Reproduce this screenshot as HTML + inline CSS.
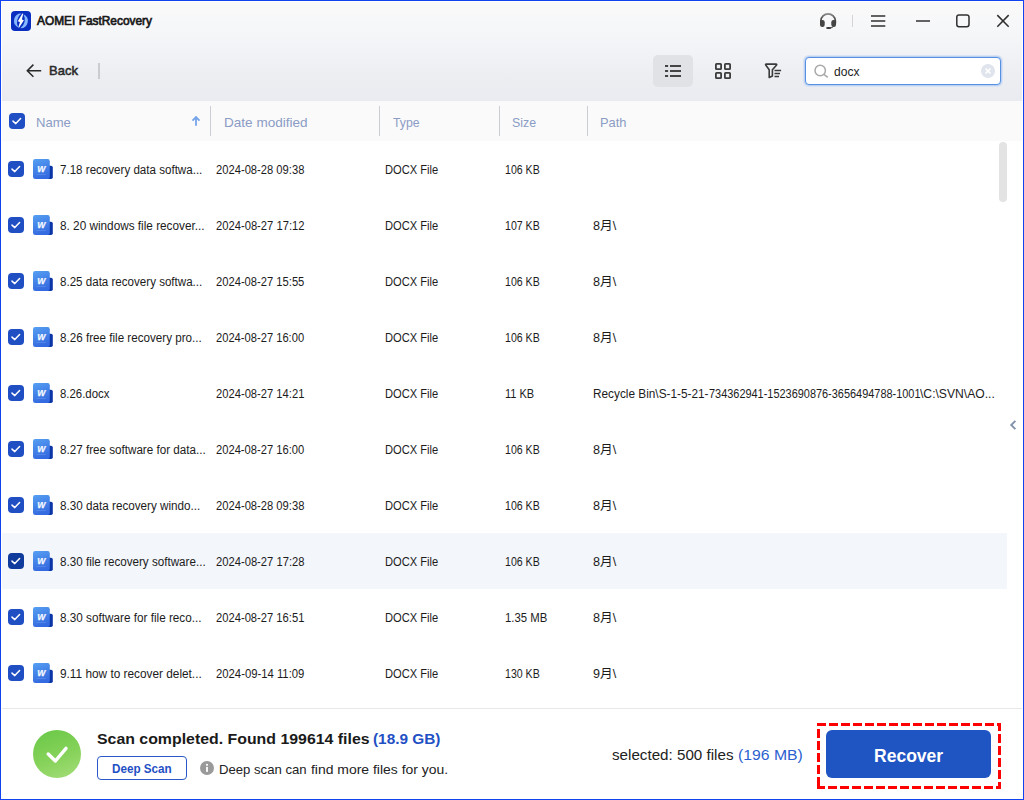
<!DOCTYPE html>
<html lang="en">
<head>
<meta charset="utf-8">
<title>AOMEI FastRecovery</title>
<style>
*{box-sizing:border-box;margin:0;padding:0}
html,body{width:1024px;height:800px;overflow:hidden;background:#fff}
body{font-family:"Liberation Sans","Noto Sans CJK SC",sans-serif;color:#1c1c1c;position:relative;font-size:12px}
div,span,svg{position:absolute}
.t{white-space:nowrap;transform-origin:0 50%;display:block}
#top{left:0;top:0;width:1024px;height:101px;background:linear-gradient(#fafafa 0%,#f5f6f8 35%,#eceef2 75%,#e9ebf0 100%)}
#title{font-size:12.5px;color:#1a1a1a;line-height:16px;-webkit-text-stroke:.7px #1a1a1a}
#back{font-size:13.6px;color:#2a2a2a;line-height:16px;-webkit-text-stroke:.55px #2a2a2a}
#hdr{left:0;top:101px;width:1024px;height:40px;background:#fafafa}
.hl{font-size:13px;color:#8b9cc5;line-height:16px}
.vsep{top:106px;width:1px;height:30px;background:#cbced5}
.cb{width:16px;height:16px;border-radius:4px;background:#1f4fc3}
.ck{left:0;top:0;width:16px;height:16px}
.wd{width:20px;height:20px}
.row{left:2px;width:1005px;height:56px;background:#f3f6fb}
.r{line-height:16px;font-size:12.3px;color:#1c1c1c}
#footline{left:2px;top:708px;width:1020px;height:1px;background:#e8e8e8}
#sb{left:999px;top:142px;width:8px;height:60px;border-radius:4px;background:#e3e3e3}
#okc{left:33px;top:730px;width:48px;height:48px;border-radius:50%;background:linear-gradient(160deg,#68c846 0%,#86d25a 55%,#a5de7a 100%)}
.scan{font-size:15px;font-weight:bold;line-height:20px;color:#1a1a1a}
#deep{left:97px;top:756px;width:90px;height:24px;border:1px solid #2a58c8;border-radius:4px;background:#fff}
#deept{font-size:12.2px;font-weight:bold;color:#1f50c4;line-height:16px}
#info{left:200px;top:761px;width:14px;height:14px}
.dm{font-size:13.6px;line-height:18px;color:#222}
.selt{font-size:15.4px;line-height:20px;color:#222}
#recbtn{left:826px;top:730px;width:165px;height:48px;border-radius:6px;background:#1f55c3}
#rect{font-size:18px;font-weight:bold;color:#fff;line-height:24px}
#q{font-size:12.2px;line-height:16px;color:#1c1c1c}
#bord{left:0;top:0;width:1024px;height:800px;border:1px solid #1044f3;pointer-events:none}
#bord2{left:1px;top:1px;width:1022px;height:798px;border:1px solid #fffffb;pointer-events:none}
</style>
</head>
<body>
<div id="top"></div>
<svg style="left:10px;top:10px;width:22px;height:22px" viewBox="-1 -1 22 22">
<rect x="-.6" y="-.6" width="21.2" height="21.2" rx="4.6" fill="#fdfdfd"/>
<rect width="20" height="20" rx="4" fill="#0a2ec0"/>
<path id="cr" d="M10.4 2.6 A7.3 7.3 0 0 0 7.4 16.6 A10.6 10.6 0 0 1 10.4 2.6 Z" fill="#86b7ff"/>
<path d="M10.4 2.6 A7.3 7.3 0 0 0 7.4 16.6 A10.6 10.6 0 0 1 10.4 2.6 Z" fill="#86b7ff" transform="rotate(180 9.9 9.9)"/>
<path d="M11.4 2.6 L12.2 2.8 L10.9 8.6 L12.9 9.2 L8 16.8 L7.3 16.5 L8.9 10.9 L6.8 10.3 Z" fill="#fff"/>
</svg>
<div id="title" class="t" style="left:37.35px;top:13px;transform:scaleX(0.9516);">AOMEI FastRecovery</div>
<svg style="left:819px;top:12px;width:19px;height:18px" viewBox="0 0 19 18">
<defs><linearGradient id="hg" x1="0" y1="0" x2="0" y2="1"><stop offset="0" stop-color="#8a8a8a"/><stop offset=".45" stop-color="#555"/><stop offset="1" stop-color="#333"/></linearGradient></defs>
<path d="M1.9 11.5 V9 A7.2 7.2 0 0 1 16.3 9 V11.5" fill="none" stroke="url(#hg)" stroke-width="1.8"/>
<rect x="1" y="8" width="4.7" height="6.9" rx="2.2" fill="#444"/>
<rect x="12.3" y="8" width="4.7" height="6.9" rx="2.2" fill="#444"/>
<path d="M14.6 14.4 Q13.4 15.8 11 16" fill="none" stroke="#444" stroke-width="1"/>
<ellipse cx="9.6" cy="16" rx="2.6" ry="1" fill="#2e2e2e"/>
</svg>
<div style="left:852px;top:15px;width:1px;height:12px;background:#d4d4d4"></div>
<svg style="left:870px;top:13px;width:16px;height:16px" viewBox="0 0 16 16"><path d="M1 2.9 H15.3 M1 8 H15.3 M1 13.1 H15.3" stroke="#303030" stroke-width="1.5" fill="none"/></svg>
<svg style="left:915px;top:13px;width:16px;height:16px" viewBox="0 0 16 16"><path d="M1 8 H15" stroke="#303030" stroke-width="1.5" fill="none"/></svg>
<svg style="left:955px;top:13px;width:16px;height:16px" viewBox="0 0 16 16"><rect x="1.8" y="1.9" width="12.2" height="11.8" rx="2.2" stroke="#303030" stroke-width="1.5" fill="none"/></svg>
<svg style="left:995px;top:13px;width:16px;height:16px" viewBox="0 0 16 16"><path d="M2.3 2.1 L13.7 13.7 M13.7 2.1 L2.3 13.7" stroke="#303030" stroke-width="1.5" fill="none"/></svg>
<svg style="left:25px;top:62px;width:18px;height:18px" viewBox="0 0 18 18"><path d="M16.2 8.7 H2.4 M8.4 2.6 L2.3 8.7 L8.4 14.8" stroke="#2a2a2a" stroke-width="1.5" fill="none"/></svg>
<div id="back" class="t" style="left:48.50px;top:63px;transform:scaleX(0.9553);">Back</div>
<div style="left:98px;top:63px;width:2px;height:16px;background:#cbcccf"></div>
<div style="left:653px;top:55px;width:40px;height:32px;border-radius:5px;background:#e0e2e6"></div>
<svg style="left:663px;top:61px;width:20px;height:20px" viewBox="0 0 20 20"><g fill="#454545"><rect x="2" y="4" width="3.1" height="2"/><rect x="2" y="9" width="3.1" height="2"/><rect x="2" y="14" width="3.1" height="2"/><rect x="7" y="4" width="11" height="2"/><rect x="7" y="9" width="11" height="2"/><rect x="7" y="14" width="11" height="2"/></g></svg>
<svg style="left:714px;top:62px;width:18px;height:18px" viewBox="0 0 18 18"><g stroke="#3c3c3c" stroke-width="1.8" fill="none"><rect x="1.9" y="1.9" width="5.2" height="5.2" rx=".7"/><rect x="10.9" y="1.9" width="5.2" height="5.2" rx=".7"/><rect x="1.9" y="10.9" width="5.2" height="5.2" rx=".7"/><rect x="10.9" y="10.9" width="5.2" height="5.2" rx=".7"/></g></svg>
<svg style="left:763px;top:62px;width:20px;height:18px" viewBox="0 0 20 18"><g stroke="#3a3a3a" stroke-width="1.6" fill="none" stroke-linejoin="round"><path d="M3.4 2.1 H12.9 Q14.3 2.1 13.4 3.2 L9.4 7.8 V14.1 L6.2 15.5 V7.8 L2.9 3.2 Q2 2.1 3.4 2.1 Z"/><path d="M11.5 8.6 H18.1 M11.5 11.6 H17 M11.5 14.6 H16" stroke-width="1.5"/></g></svg>
<div style="left:805px;top:57px;width:196px;height:28px;border-radius:4px;background:#fff;border:1px solid #5590e2;box-shadow:0 0 0 1px #bcd1f2,0 0 0 2px #d9e3f3"></div>
<svg style="left:812px;top:63px;width:18px;height:18px" viewBox="0 0 18 18"><circle cx="8.2" cy="7.5" r="5.2" stroke="#a9a9a9" stroke-width="1.5" fill="none"/><path d="M11.9 11.3 L15.8 14.4" stroke="#a9a9a9" stroke-width="1.6" fill="none"/></svg>
<div id="q" class="t" style="left:833.63px;top:63.5px;transform:scaleX(0.9872);">docx</div>
<svg style="left:981px;top:64px;width:14px;height:14px" viewBox="0 0 14 14"><circle cx="7" cy="7" r="7" fill="#dfe4ed"/><path d="M4.5 4.5 L9.5 9.5 M9.5 4.5 L4.5 9.5" stroke="#fff" stroke-width="1.7" fill="none"/></svg>
<div id="hdr"></div>
<div class="cb" style="left:9px;top:113px"><svg class="ck" viewBox="0 0 16 16"><path d="M4 8.1 L6.8 10.6 L11.6 5.6" fill="none" stroke="#fff" stroke-width="1.5" stroke-linecap="round" stroke-linejoin="round"/></svg></div>
<div id="h1" class="t hl" style="left:35.64px;top:114.8px;transform:scaleX(1.0062);">Name</div>
<div id="h2" class="t hl" style="left:223.79px;top:114.8px;transform:scaleX(1.0425);">Date modified</div>
<div id="h3" class="t hl" style="left:393.29px;top:114.8px;transform:scaleX(0.9408);">Type</div>
<div id="h4" class="t hl" style="left:511.96px;top:114.8px;transform:scaleX(0.9514);">Size</div>
<div id="h5" class="t hl" style="left:599.94px;top:114.8px;transform:scaleX(0.9902);">Path</div>
<div class="vsep" style="left:210px"></div>
<div class="vsep" style="left:379px"></div>
<div class="vsep" style="left:499px"></div>
<div class="vsep" style="left:587px"></div>
<svg style="left:191px;top:116px;width:10px;height:11px" viewBox="0 0 10 11"><path d="M5 9.8 V1.2 M1.5 4.6 L5 1 L8.5 4.6" stroke="#76a4e9" stroke-width="1.8" fill="none"/></svg>
<svg style="left:0;top:0;width:0;height:0"><defs><linearGradient id="wg" x1="0" y1="0" x2="0.3" y2="1"><stop offset="0" stop-color="#56a0f2"/><stop offset="1" stop-color="#356be0"/></linearGradient></defs></svg>
<div class="cb" style="left:8px;top:161px"><svg class="ck" viewBox="0 0 16 16"><path d="M4 8.1 L6.8 10.6 L11.6 5.6" fill="none" stroke="#fff" stroke-width="1.5" stroke-linecap="round" stroke-linejoin="round"/></svg></div><svg class="wd" style="left:33px;top:159px" viewBox="0 0 20 20"><path d="M14 6.8 h4 a1.8 1.8 0 0 1 1.8 1.8 v9.6 a1.8 1.8 0 0 1 -1.8 1.8 h-4 z" fill="#0b35a6"/><rect x="0" y="0" width="16.8" height="20" rx="2.2" fill="url(#wg)"/><rect x="3.5" y="15" width="9.5" height="0.8" fill="#7aa6f4" opacity=".45"/><text x="8.2" y="12.8" text-anchor="middle" font-family="Liberation Sans,sans-serif" font-weight="bold" font-style="italic" font-size="8.6" fill="#f6f9ff" stroke="#f6f9ff" stroke-width=".25">W</text></svg><div id="n0" class="t r" style="left:59.57px;top:161.5px;transform:scaleX(0.9423);">7.18 recovery data softwa...</div><div id="d0" class="t r" style="left:216.05px;top:161.5px;transform:scaleX(0.9103);">2024-08-28 09:38</div><div id="t0" class="t r" style="left:385.38px;top:161.5px;transform:scaleX(0.9062);">DOCX File</div><div id="s0" class="t r" style="left:505.01px;top:161.5px;transform:scaleX(0.8605);">106 KB</div>
<div class="cb" style="left:8px;top:217px"><svg class="ck" viewBox="0 0 16 16"><path d="M4 8.1 L6.8 10.6 L11.6 5.6" fill="none" stroke="#fff" stroke-width="1.5" stroke-linecap="round" stroke-linejoin="round"/></svg></div><svg class="wd" style="left:33px;top:215px" viewBox="0 0 20 20"><path d="M14 6.8 h4 a1.8 1.8 0 0 1 1.8 1.8 v9.6 a1.8 1.8 0 0 1 -1.8 1.8 h-4 z" fill="#0b35a6"/><rect x="0" y="0" width="16.8" height="20" rx="2.2" fill="url(#wg)"/><rect x="3.5" y="15" width="9.5" height="0.8" fill="#7aa6f4" opacity=".45"/><text x="8.2" y="12.8" text-anchor="middle" font-family="Liberation Sans,sans-serif" font-weight="bold" font-style="italic" font-size="8.6" fill="#f6f9ff" stroke="#f6f9ff" stroke-width=".25">W</text></svg><div id="n1" class="t r" style="left:59.66px;top:217.5px;transform:scaleX(0.9569);">8. 20 windows file recover...</div><div id="d1" class="t r" style="left:216.05px;top:217.5px;transform:scaleX(0.9110);">2024-08-27 17:12</div><div id="t1" class="t r" style="left:385.38px;top:217.5px;transform:scaleX(0.9062);">DOCX File</div><div id="s1" class="t r" style="left:505.01px;top:217.5px;transform:scaleX(0.8605);">107 KB</div><div id="p1" class="t r" style="left:593.38px;top:217.5px;transform:scaleX(1.0294);">8月\</div>
<div class="cb" style="left:8px;top:273px"><svg class="ck" viewBox="0 0 16 16"><path d="M4 8.1 L6.8 10.6 L11.6 5.6" fill="none" stroke="#fff" stroke-width="1.5" stroke-linecap="round" stroke-linejoin="round"/></svg></div><svg class="wd" style="left:33px;top:271px" viewBox="0 0 20 20"><path d="M14 6.8 h4 a1.8 1.8 0 0 1 1.8 1.8 v9.6 a1.8 1.8 0 0 1 -1.8 1.8 h-4 z" fill="#0b35a6"/><rect x="0" y="0" width="16.8" height="20" rx="2.2" fill="url(#wg)"/><rect x="3.5" y="15" width="9.5" height="0.8" fill="#7aa6f4" opacity=".45"/><text x="8.2" y="12.8" text-anchor="middle" font-family="Liberation Sans,sans-serif" font-weight="bold" font-style="italic" font-size="8.6" fill="#f6f9ff" stroke="#f6f9ff" stroke-width=".25">W</text></svg><div id="n2" class="t r" style="left:59.75px;top:273.5px;transform:scaleX(0.9418);">8.25 data recovery softwa...</div><div id="d2" class="t r" style="left:216.05px;top:273.5px;transform:scaleX(0.9099);">2024-08-27 15:55</div><div id="t2" class="t r" style="left:385.38px;top:273.5px;transform:scaleX(0.9062);">DOCX File</div><div id="s2" class="t r" style="left:505.01px;top:273.5px;transform:scaleX(0.8605);">106 KB</div><div id="p2" class="t r" style="left:593.38px;top:273.5px;transform:scaleX(1.0294);">8月\</div>
<div class="cb" style="left:8px;top:329px"><svg class="ck" viewBox="0 0 16 16"><path d="M4 8.1 L6.8 10.6 L11.6 5.6" fill="none" stroke="#fff" stroke-width="1.5" stroke-linecap="round" stroke-linejoin="round"/></svg></div><svg class="wd" style="left:33px;top:327px" viewBox="0 0 20 20"><path d="M14 6.8 h4 a1.8 1.8 0 0 1 1.8 1.8 v9.6 a1.8 1.8 0 0 1 -1.8 1.8 h-4 z" fill="#0b35a6"/><rect x="0" y="0" width="16.8" height="20" rx="2.2" fill="url(#wg)"/><rect x="3.5" y="15" width="9.5" height="0.8" fill="#7aa6f4" opacity=".45"/><text x="8.2" y="12.8" text-anchor="middle" font-family="Liberation Sans,sans-serif" font-weight="bold" font-style="italic" font-size="8.6" fill="#f6f9ff" stroke="#f6f9ff" stroke-width=".25">W</text></svg><div id="n3" class="t r" style="left:59.66px;top:329.5px;transform:scaleX(0.9473);">8.26 free file recovery pro...</div><div id="d3" class="t r" style="left:216.05px;top:329.5px;transform:scaleX(0.9075);">2024-08-27 16:00</div><div id="t3" class="t r" style="left:385.38px;top:329.5px;transform:scaleX(0.9062);">DOCX File</div><div id="s3" class="t r" style="left:505.01px;top:329.5px;transform:scaleX(0.8605);">106 KB</div><div id="p3" class="t r" style="left:593.38px;top:329.5px;transform:scaleX(1.0294);">8月\</div>
<div class="cb" style="left:8px;top:385px"><svg class="ck" viewBox="0 0 16 16"><path d="M4 8.1 L6.8 10.6 L11.6 5.6" fill="none" stroke="#fff" stroke-width="1.5" stroke-linecap="round" stroke-linejoin="round"/></svg></div><svg class="wd" style="left:33px;top:383px" viewBox="0 0 20 20"><path d="M14 6.8 h4 a1.8 1.8 0 0 1 1.8 1.8 v9.6 a1.8 1.8 0 0 1 -1.8 1.8 h-4 z" fill="#0b35a6"/><rect x="0" y="0" width="16.8" height="20" rx="2.2" fill="url(#wg)"/><rect x="3.5" y="15" width="9.5" height="0.8" fill="#7aa6f4" opacity=".45"/><text x="8.2" y="12.8" text-anchor="middle" font-family="Liberation Sans,sans-serif" font-weight="bold" font-style="italic" font-size="8.6" fill="#f6f9ff" stroke="#f6f9ff" stroke-width=".25">W</text></svg><div id="n4" class="t r" style="left:59.75px;top:385.5px;transform:scaleX(0.9268);">8.26.docx</div><div id="d4" class="t r" style="left:216.05px;top:385.5px;transform:scaleX(0.9103);">2024-08-27 14:21</div><div id="t4" class="t r" style="left:385.38px;top:385.5px;transform:scaleX(0.9062);">DOCX File</div><div id="s4" class="t r" style="left:505.01px;top:385.5px;transform:scaleX(0.8958);">11 KB</div><div id="p4a" class="t r" style="left:592.79px;top:385.5px;transform:scaleX(0.9606);">Recycle Bin\S-1-5-21-</div><div id="p4b" class="t r" style="left:708.92px;top:385.5px;transform:scaleX(0.8887);">734362941-1523690876-3656494788-1001</div><div id="p4c" class="t r" style="left:920.31px;top:385.5px;transform:scaleX(0.9865);">\C:\SVN\AO...</div>
<div class="cb" style="left:8px;top:441px"><svg class="ck" viewBox="0 0 16 16"><path d="M4 8.1 L6.8 10.6 L11.6 5.6" fill="none" stroke="#fff" stroke-width="1.5" stroke-linecap="round" stroke-linejoin="round"/></svg></div><svg class="wd" style="left:33px;top:439px" viewBox="0 0 20 20"><path d="M14 6.8 h4 a1.8 1.8 0 0 1 1.8 1.8 v9.6 a1.8 1.8 0 0 1 -1.8 1.8 h-4 z" fill="#0b35a6"/><rect x="0" y="0" width="16.8" height="20" rx="2.2" fill="url(#wg)"/><rect x="3.5" y="15" width="9.5" height="0.8" fill="#7aa6f4" opacity=".45"/><text x="8.2" y="12.8" text-anchor="middle" font-family="Liberation Sans,sans-serif" font-weight="bold" font-style="italic" font-size="8.6" fill="#f6f9ff" stroke="#f6f9ff" stroke-width=".25">W</text></svg><div id="n5" class="t r" style="left:59.66px;top:441.5px;transform:scaleX(0.9471);">8.27 free software for data...</div><div id="d5" class="t r" style="left:215.55px;top:441.5px;transform:scaleX(0.9083);">2024-08-27 16:00</div><div id="t5" class="t r" style="left:385.38px;top:441.5px;transform:scaleX(0.9062);">DOCX File</div><div id="s5" class="t r" style="left:505.01px;top:441.5px;transform:scaleX(0.8605);">106 KB</div><div id="p5" class="t r" style="left:593.38px;top:441.5px;transform:scaleX(1.0294);">8月\</div>
<div class="cb" style="left:8px;top:497px"><svg class="ck" viewBox="0 0 16 16"><path d="M4 8.1 L6.8 10.6 L11.6 5.6" fill="none" stroke="#fff" stroke-width="1.5" stroke-linecap="round" stroke-linejoin="round"/></svg></div><svg class="wd" style="left:33px;top:495px" viewBox="0 0 20 20"><path d="M14 6.8 h4 a1.8 1.8 0 0 1 1.8 1.8 v9.6 a1.8 1.8 0 0 1 -1.8 1.8 h-4 z" fill="#0b35a6"/><rect x="0" y="0" width="16.8" height="20" rx="2.2" fill="url(#wg)"/><rect x="3.5" y="15" width="9.5" height="0.8" fill="#7aa6f4" opacity=".45"/><text x="8.2" y="12.8" text-anchor="middle" font-family="Liberation Sans,sans-serif" font-weight="bold" font-style="italic" font-size="8.6" fill="#f6f9ff" stroke="#f6f9ff" stroke-width=".25">W</text></svg><div id="n6" class="t r" style="left:59.66px;top:497.5px;transform:scaleX(0.9506);">8.30 data recovery windo...</div><div id="d6" class="t r" style="left:216.05px;top:497.5px;transform:scaleX(0.9103);">2024-08-28 09:38</div><div id="t6" class="t r" style="left:385.38px;top:497.5px;transform:scaleX(0.9062);">DOCX File</div><div id="s6" class="t r" style="left:505.01px;top:497.5px;transform:scaleX(0.8605);">106 KB</div><div id="p6" class="t r" style="left:593.38px;top:497.5px;transform:scaleX(1.0294);">8月\</div>
<div class="row" style="top:533px"></div><div class="cb" style="left:8px;top:553px;background:#0e3b9c"><svg class="ck" viewBox="0 0 16 16"><path d="M4 8.1 L6.8 10.6 L11.6 5.6" fill="none" stroke="#fff" stroke-width="1.5" stroke-linecap="round" stroke-linejoin="round"/></svg></div><svg class="wd" style="left:33px;top:551px" viewBox="0 0 20 20"><path d="M14 6.8 h4 a1.8 1.8 0 0 1 1.8 1.8 v9.6 a1.8 1.8 0 0 1 -1.8 1.8 h-4 z" fill="#0b35a6"/><rect x="0" y="0" width="16.8" height="20" rx="2.2" fill="url(#wg)"/><rect x="3.5" y="15" width="9.5" height="0.8" fill="#7aa6f4" opacity=".45"/><text x="8.2" y="12.8" text-anchor="middle" font-family="Liberation Sans,sans-serif" font-weight="bold" font-style="italic" font-size="8.6" fill="#f6f9ff" stroke="#f6f9ff" stroke-width=".25">W</text></svg><div id="n7" class="t r" style="left:59.75px;top:553.5px;transform:scaleX(0.9471);">8.30 file recovery software...</div><div id="d7" class="t r" style="left:215.64px;top:553.5px;transform:scaleX(0.9112);">2024-08-27 17:28</div><div id="t7" class="t r" style="left:385.38px;top:553.5px;transform:scaleX(0.9061);">DOCX File</div><div id="s7" class="t r" style="left:505.01px;top:553.5px;transform:scaleX(0.8602);">106 KB</div><div id="p7" class="t r" style="left:593.38px;top:553.5px;transform:scaleX(1.0301);">8月\</div>
<div class="cb" style="left:8px;top:609px"><svg class="ck" viewBox="0 0 16 16"><path d="M4 8.1 L6.8 10.6 L11.6 5.6" fill="none" stroke="#fff" stroke-width="1.5" stroke-linecap="round" stroke-linejoin="round"/></svg></div><svg class="wd" style="left:33px;top:607px" viewBox="0 0 20 20"><path d="M14 6.8 h4 a1.8 1.8 0 0 1 1.8 1.8 v9.6 a1.8 1.8 0 0 1 -1.8 1.8 h-4 z" fill="#0b35a6"/><rect x="0" y="0" width="16.8" height="20" rx="2.2" fill="url(#wg)"/><rect x="3.5" y="15" width="9.5" height="0.8" fill="#7aa6f4" opacity=".45"/><text x="8.2" y="12.8" text-anchor="middle" font-family="Liberation Sans,sans-serif" font-weight="bold" font-style="italic" font-size="8.6" fill="#f6f9ff" stroke="#f6f9ff" stroke-width=".25">W</text></svg><div id="n8" class="t r" style="left:59.66px;top:609.5px;transform:scaleX(0.9544);">8.30 software for file reco...</div><div id="d8" class="t r" style="left:216.05px;top:609.5px;transform:scaleX(0.9103);">2024-08-27 16:51</div><div id="t8" class="t r" style="left:385.38px;top:609.5px;transform:scaleX(0.9062);">DOCX File</div><div id="s8" class="t r" style="left:505.01px;top:609.5px;transform:scaleX(0.9239);">1.35 MB</div><div id="p8" class="t r" style="left:593.38px;top:609.5px;transform:scaleX(1.0294);">8月\</div>
<div class="cb" style="left:8px;top:665px"><svg class="ck" viewBox="0 0 16 16"><path d="M4 8.1 L6.8 10.6 L11.6 5.6" fill="none" stroke="#fff" stroke-width="1.5" stroke-linecap="round" stroke-linejoin="round"/></svg></div><svg class="wd" style="left:33px;top:663px" viewBox="0 0 20 20"><path d="M14 6.8 h4 a1.8 1.8 0 0 1 1.8 1.8 v9.6 a1.8 1.8 0 0 1 -1.8 1.8 h-4 z" fill="#0b35a6"/><rect x="0" y="0" width="16.8" height="20" rx="2.2" fill="url(#wg)"/><rect x="3.5" y="15" width="9.5" height="0.8" fill="#7aa6f4" opacity=".45"/><text x="8.2" y="12.8" text-anchor="middle" font-family="Liberation Sans,sans-serif" font-weight="bold" font-style="italic" font-size="8.6" fill="#f6f9ff" stroke="#f6f9ff" stroke-width=".25">W</text></svg><div id="n9" class="t r" style="left:60.10px;top:665.5px;transform:scaleX(0.9614);">9.11 how to recover delet...</div><div id="d9" class="t r" style="left:216.05px;top:665.5px;transform:scaleX(0.9185);">2024-09-14 11:09</div><div id="t9" class="t r" style="left:385.38px;top:665.5px;transform:scaleX(0.9062);">DOCX File</div><div id="s9" class="t r" style="left:505.01px;top:665.5px;transform:scaleX(0.8605);">130 KB</div><div id="p9" class="t r" style="left:592.92px;top:665.5px;transform:scaleX(1.0264);">9月\</div>
<div id="sb"></div>
<svg style="left:1008px;top:419px;width:10px;height:12px" viewBox="0 0 10 12"><path d="M7.4 1.8 L3.2 6 L7.4 10.2" stroke="#8392ab" stroke-width="1.9" fill="none"/></svg>
<div id="footline"></div>
<div id="okc"></div>
<svg style="left:33px;top:730px;width:48px;height:48px" viewBox="0 0 48 48"><path d="M15.2 24 L22.4 31 L33 18.4" stroke="#fff" stroke-width="3.4" fill="none" stroke-linecap="round" stroke-linejoin="round"/></svg>
<div id="scan" class="t scan" style="left:97.12px;top:729px;transform:scaleX(1.0581);">Scan completed. Found 199614 files</div><div id="scan2" class="t scan" style="left:373.09px;top:729px;transform:scaleX(1.0244);color:#1f50c4;">(18.9 GB)</div>
<div id="deep"></div><div id="deept" class="t" style="left:111.68px;top:761px;transform:scaleX(0.9588);">Deep Scan</div>
<svg id="info" viewBox="0 0 14 14"><circle cx="7" cy="7" r="7" fill="#9a9a9a"/><rect x="6.1" y="5.9" width="1.8" height="5" fill="#fff"/><circle cx="7" cy="3.8" r="1.1" fill="#fff"/></svg>
<div id="dm1" class="t dm" style="left:218.67px;top:761px;transform:scaleX(0.9657);">Deep scan can</div><div id="dm2" class="t dm" style="left:311.27px;top:761px;transform:scaleX(1.0256);">find more files for you.</div>
<div id="selt" class="t selt" style="left:611.90px;top:745px;transform:scaleX(0.9862);">selected: 500 files</div><div id="selt2" class="t selt" style="left:737.70px;top:745px;transform:scaleX(1.0227);color:#2c5fd0;">(196 MB)</div>
<svg style="left:817px;top:723px;width:184px;height:66px" viewBox="0 0 184 66"><g stroke="#ff0000" stroke-width="3" stroke-dasharray="9 3" fill="none"><path d="M0 1.5 H184"/><path d="M-1 64.5 H184"/><path d="M1.5 6 V66"/><path d="M182.5 -1 V66"/></g></svg>
<div id="recbtn"></div><div id="rect" class="t" style="left:873.56px;top:743.5px;transform:scaleX(0.9733);">Recover</div>
<div id="bord"></div><div id="bord2"></div>
</body>
</html>
